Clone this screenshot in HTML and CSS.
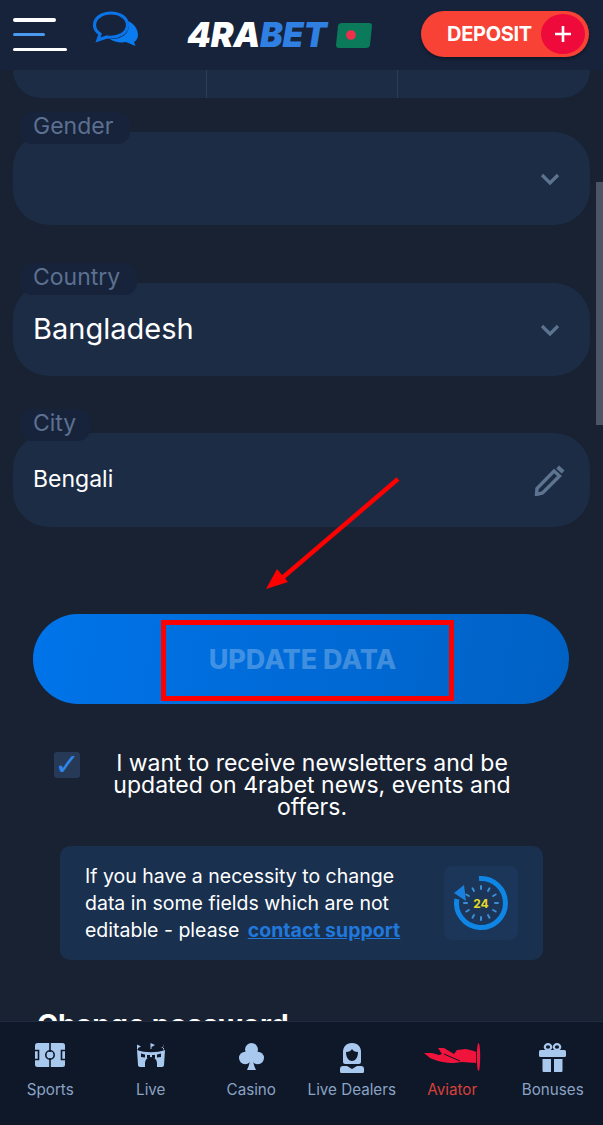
FILE: index.html
```html
<!DOCTYPE html>
<html>
	<head>
		<title>4rabet profile</title>
		<link rel="stylesheet" href="styles.css">
	</head>
	<body>
		<div class="screen">
			<header class="topbar">
				<button class="burger"><i class="b1"></i><i class="b2"></i><i class="b3"></i></button>
				<svg class="chat" viewBox="0 0 48 38" width="48" height="38">
					<path d="M36 11C43 14 46 20 46 25C46 28 44 31 42 32L43.500 36L34 32C28 33 22 32 18 29C28 30 40 24 36 11z" fill="#0b7bf0"/>
					<path d="M19 3C10 3 2.500 8 2.500 15C2.500 19 5 22 8 24L6 30L15 27C26 28.500 35.500 23 35.500 15C35.500 8 28 3 19 3z" fill="#17233a" stroke="#0b73e8" stroke-width="3.200"/>
				</svg>
				<div class="logo"><span class="logo-w">4RA</span><span class="logo-b">BET</span></div>
				<svg class="flag" viewBox="0 0 36 25" width="36" height="25">
					<path d="M6 0h27c2 0 3 1 3 3l-2 19c0 2-2 3-4 3H3c-2 0-3-1-3-3L2 3c0-2 2-3 4-3z" fill="#0a7a5a"/>
					<circle cx="15" cy="12" r="4.800" fill="#f0304a"/>
				</svg>
				<button class="deposit">DEPOSIT<span class="plus"><svg viewBox="0 0 16 16" width="16" height="16"><path d="M8 0v16M0 8h16" stroke="#fff" stroke-width="2.600"/></svg></span></button>
			</header>

			<main class="content">
				<div class="dateRow"><span></span><span></span><span></span></div>

				<div class="field first">
					<label class="tag">Gender</label>
					<div class="box">
						<span class="val"></span>
						<svg class="chev" viewBox="0 0 20 12" width="20" height="12"><path d="M2 2l8 8 8-8" fill="none" stroke="#5d7490" stroke-width="3.200"/></svg>
					</div>
				</div>
				<div class="field country">
					<label class="tag">Country</label>
					<div class="box">
						<span class="val big">Bangladesh</span>
						<svg class="chev" viewBox="0 0 20 12" width="20" height="12"><path d="M2 2l8 8 8-8" fill="none" stroke="#5d7490" stroke-width="3.200"/></svg>
					</div>
				</div>
				<div class="field city">
					<label class="tag">City</label>
					<div class="box">
						<span class="val">Bengali</span>
						<svg class="pencil" viewBox="0 0 32 32" width="32" height="32">
							<path d="M25 1.500l5.500 5-2.800 3-5.500-5z" fill="#5d7490"/>
							<path d="M20 7l5.500 5L8.500 29 2.500 30.500 3 24.500z" fill="none" stroke="#5d7490" stroke-width="3.400"/>
						</svg>
					</div>
				</div>

				<button class="update"><span>UPDATE DATA</span></button>

				<label class="news">
					<span class="check">&#10003;</span>
					<span class="newsText">I want to receive newsletters and be updated on 4rabet news, events and offers.</span>
				</label>

				<div class="notice">
					<p>If you have a necessity to change data in some fields which are not editable - please <a href="#">contact support</a></p>
					<div class="clockBox">
						<svg viewBox="0 0 60 60" width="60" height="60">
							<path d="M28 5.600A24.500 24.500 0 1 1 5.800 26" fill="none" stroke="#0f86e6" stroke-width="5"/>
							<path d="M3 20L13 12 15 28z" fill="#1a80e0"/>
							<g stroke="#3a8fd8" stroke-width="2" stroke-linecap="round">
								<path d="M30 13v3M30 44v3M13 30h3M44 30h3M38.500 15.300l-1.500 2.600M21.500 44.700l1.500-2.600M44.700 21.500l-2.600 1.500M15.300 38.500l2.600-1.500M44.700 38.500l-2.600-1.500M38.500 44.700l-1.500-2.600M21.500 15.300l1.500 2.600M15.300 21.500l2.600 1.500"/>
							</g>
							<text x="30" y="34.500" text-anchor="middle" class="clockNum">24</text>
						</svg>
					</div>
				</div>

				<h2 class="pwTitle">Change password</h2>
			</main>

			<nav class="tabs">
				<a class="tab">
					<svg viewBox="0 0 30 24" width="30" height="24">
						<rect width="30" height="24" rx="2.500"/>
						<path class="cut" d="M15 0v9M15 15v9M0 7.500h3.500v9H0M30 7.500h-3.500v9H30"/>
						<circle class="cut" cx="15" cy="12" r="4.200"/>
					</svg>
					<span>Sports</span>
				</a>
				<a class="tab">
					<svg viewBox="0 0 30 25" width="30" height="25">
						<path d="M1 1.500v5h1V5l3-1.500zM14.500 0v6h1V4l3.500-2zM27 1v5.500h1V5l-3-.500 2.500-1z"/>
						<path d="M1 7c8 3 20 3 28 0l-1 15c0 1-1 2-2 2h-5v-4a6 6 0 0 0-12 0v4H4c-1 0-2-1-2-2z"/>
						<path class="hole" d="M5 10.500l4 1v3l-4-.500zM11 12h3v3h-3zM16 12h3v3h-3zM25 10.500l-4 1v3l4-.500z"/>
					</svg>
					<span>Live</span>
				</a>
				<a class="tab">
					<svg viewBox="0 0 25 27" width="25" height="27">
						<circle cx="12.500" cy="6.500" r="6.500"/>
						<circle cx="6.200" cy="15" r="6.200"/>
						<circle cx="18.800" cy="15" r="6.200"/>
						<path d="M11.500 10h2c0 7 1 12 3.500 17H8c2.500-5 3.500-10 3.500-17z"/>
					</svg>
					<span>Casino</span>
				</a>
				<a class="tab">
					<svg viewBox="0 0 24 30" width="24" height="30">
						<path d="M12 0c6 0 9 4 9 9v10c0 1-1 2-2 2H5c-1 0-2-1-2-2V9c0-5 3-9 9-9z"/>
						<path class="hole" d="M6 9c3 0 5-1 6-3 1 2 3 3 6 3 0 6-3 9-6 9s-6-3-6-9z"/>
						<path d="M3 23h4l5 3 5-3h4c2 0 3 1 3 3v3c0 .700-1 1-2 1H2c-1 0-2-.300-2-1v-3c0-2 1-3 3-3z"/>
					</svg>
					<span>Live Dealers</span>
				</a>
				<a class="tab active">
					<svg viewBox="0 0 57 28" width="57" height="28">
						<path d="M0 10l8 0 7 2 3-1-4-6 6 0 10 6 3-4 9-1 8 2 2 1v11l-14-1-8 1C22 20 12 18 6 15z" fill="#f0133c"/>
						<path d="M20 11l16 7" stroke="#0e1828" stroke-width="1" fill="none"/>
						<ellipse cx="54.500" cy="14" rx="1.700" ry="14" fill="#f0133c"/>
					</svg>
					<span>Aviator</span>
				</a>
				<a class="tab">
					<svg viewBox="0 0 27 29" width="27" height="29">
						<ellipse cx="9" cy="4" rx="3.200" ry="2.800" fill="none" stroke="#a9c8ee" stroke-width="2.200"/>
						<ellipse cx="18" cy="4" rx="3.200" ry="2.800" fill="none" stroke="#a9c8ee" stroke-width="2.200"/>
						<rect y="7" width="27" height="7" rx="1.500"/>
						<path d="M3.500 16h8.500v13H5c-1 0-1.500-.500-1.500-1.500zM15 16h8.500v11.500c0 1-.500 1.500-1.500 1.500h-7z"/>
					</svg>
					<span>Bonuses</span>
				</a>
			</nav>

			<div class="scrollThumb"></div>

			<!-- annotation on top of the screenshot -->
			<svg class="arrow" viewBox="0 0 140 115" width="140" height="115">
				<path d="M132 3L15 103" stroke="#f00" stroke-width="4.500"/>
				<path d="M0 113L11 93l11 13z" fill="#f00"/>
			</svg>
			<div class="redBox"></div>
		</div>
	</body>
</html>
```

FILE: styles.css
```css
* {
	box-sizing: border-box;
}
html, body {
	margin: 0;
	height: 100%;
}
body {
	background: #182233;
	color: #fff;
	font-family: "Inter", "Liberation Sans", sans-serif;
	overflow: hidden;
}
button {
	border: 0;
	padding: 0;
	font-family: inherit;
	background: none;
}

.screen {
	position: relative;
	width: 603px;
	height: 1125px;
	overflow: hidden;
}

/* top bar */
.topbar {
	height: 70px;
	background: #17233a;
	display: flex;
	align-items: center;
	padding: 0 13px;
}
.burger {
	flex: none;
	width: 54px;
	height: 33px;
	display: flex;
	flex-direction: column;
	justify-content: space-between;
	margin-top: -1px;
}
.burger i {
	display: block;
	height: 3.500px;
	border-radius: 2px;
	background: #fff;
}
.burger .b1 {
	width: 43px;
}
.burger .b2 {
	width: 32px;
	background: #4a9bf0;
}
.burger .b3 {
	width: 54px;
}
.chat {
	flex: none;
	margin: -12px 0 0 25px;
}
.logo {
	margin: -1px 0 0 47px;
	font-size: 34px;
	font-weight: 900;
	font-style: italic;
	letter-spacing: -.2px;
	line-height: 1;
}
.logo-b {
	color: #2f80e2;
}
.flag {
	flex: none;
	margin: 1px 0 0 9px;
}
.deposit {
	margin-left: auto;
	margin-right: 1px;
	width: 168px;
	height: 46px;
	border-radius: 23px;
	background: #f84235;
	color: #fff;
	font-size: 20px;
	font-weight: 700;
	display: flex;
	align-items: center;
	padding: 0 4px 0 26px;
	box-shadow: 0 2px 3px rgba(0,0,0,.35);
	margin-top: -2px;
	letter-spacing: -.3px;
}
.plus {
	margin-left: auto;
	width: 44px;
	height: 40px;
	border-radius: 50%;
	background: #ee0a3a;
	display: flex;
	align-items: center;
	justify-content: center;
}

/* form */
.content {
	padding: 0 13px;
}
.dateRow {
	height: 28px;
	background: #1d2c45;
	border-radius: 0 0 28px 28px;
	display: grid;
	grid-template-columns: 194px 191px 1fr;
}
.dateRow span {
	border-right: 1px solid #2d3d57;
}
.dateRow span:last-child {
	border: 0;
}
.field {
	position: relative;
}
.field.first {
	margin-top: 34px;
}
.field.country {
	margin-top: 58px;
}
.field.city {
	margin-top: 57px;
}
.box {
	height: 93px;
	border-radius: 36px;
	background: #1d2c45;
	display: flex;
	align-items: center;
	justify-content: space-between;
	padding: 0 30px 0 20px;
}
.city .box {
	height: 94px;
}
.tag {
	position: absolute;
	left: 7px;
	top: -20px;
	height: 32px;
	padding: 0 17px 0 13px;
	border-radius: 12px;
	background: #16233a;
	color: #5d7090;
	font-size: 23px;
	line-height: 28px;
}
.city .tag {
	top: -24px;
	padding-right: 14px;
}
.val {
	font-size: 23px;
	font-weight: 400;
	margin-top: -3px;
}
.val.big {
	font-size: 29px;
}
.pencil {
	margin-right: -6px;
	margin-top: -1px;
}
.update {
	display: block;
	width: 536px;
	height: 90px;
	margin: 87px 0 0 20px;
	border-radius: 45px;
	background: linear-gradient(100deg, #0074ea, #0061c4);
	color: rgba(255,255,255,.25);
	font-size: 27px;
	font-weight: 800;
	padding-left: 3px;
}
.news {
	display: flex;
	margin-top: 48px;
	padding-left: 41px;
}
.check {
	flex: none;
	width: 26px;
	height: 26px;
	border-radius: 3px;
	background: #263a58;
	color: #2f86e8;
	font-size: 30px;
	line-height: 26px;
	text-align: center;
	font-family: "DejaVu Sans", sans-serif;
}
.newsText {
	width: 402px;
	margin-left: 31px;
	font-size: 23px;
	line-height: 22px;
	text-align: center;
}
.notice {
	width: 483px;
	height: 114px;
	margin: 28px 0 0 47px;
	border-radius: 10px;
	background: #19304f;
	display: flex;
	align-items: center;
	padding: 0 25px;
	justify-content: space-between;
}
.notice p {
	margin: 0;
	width: 335px;
	font-size: 19.500px;
	line-height: 27px;
}
.notice a {
	color: #2178dc;
	font-weight: 700;
	margin-left: 3px;
}
.clockBox {
	width: 74px;
	height: 74px;
	border-radius: 8px;
	background: #1b3658;
	display: flex;
	align-items: center;
	justify-content: center;
}
.clockNum {
	fill: #e6d826;
	font-size: 12px;
	font-weight: 700;
}
.pwTitle {
	margin: 49px 0 0 24px;
	font-size: 28.500px;
	font-weight: 700;
	line-height: 32px;
}

/* bottom tabs */
.tabs {
	position: absolute;
	left: 0;
	right: 0;
	bottom: 0;
	height: 104px;
	background: #0e1828;
	border-top: 1px solid #1f2c40;
	display: grid;
	grid-template-columns: repeat(6, 100.500px);
}
.tab {
	display: flex;
	flex-direction: column;
	align-items: center;
	color: #8ba3c4;
	font-size: 15.200px;
	padding-top: 21px;
	height: 100%;
	position: relative;
}
.tab svg {
	display: block;
	fill: #a9c8ee;
}
.tab .cut {
	fill: none;
	stroke: #0e1828;
	stroke-width: 1.600;
}
.tab .hole {
	fill: #0e1828;
}
.tab span {
	position: absolute;
	top: 58px;
	white-space: nowrap;
}
.tab.active {
	color: #d8413a;
}

.scrollThumb {
	position: absolute;
	right: 0;
	top: 182px;
	width: 7px;
	height: 243px;
	background: #4b5563;
}

.arrow {
	position: absolute;
	left: 266px;
	top: 476px;
}
.redBox {
	position: absolute;
	left: 161px;
	top: 620px;
	width: 293px;
	height: 81px;
	border: 5px solid #f00;
}
```
